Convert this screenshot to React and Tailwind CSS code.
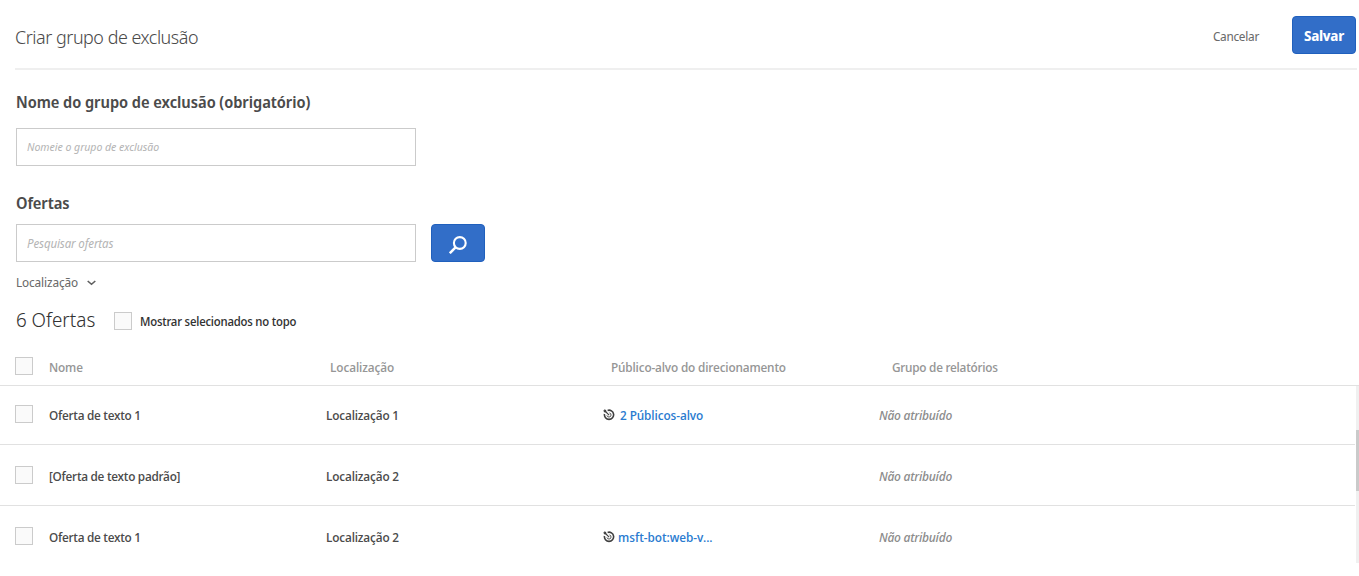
const rows = [
  { name: "Oferta de texto 1", location: "Localização 1", audience: "2 Públicos-alvo", gap: "pl-[5px] tracking-[-0.08px]" },
  { name: "[Oferta de texto padrão]", location: "Localização 2" },
  { name: "Oferta de texto 1", location: "Localização 2", audience: "msft-bot:web-v...", gap: "pl-[3px] tracking-[-0.02px]" },
];

function Checkbox({ className = "" }) {
  return <span role="checkbox" aria-checked="false" className={`block size-[18px] shrink-0 border border-[#cbcbcb] bg-[#fafafa] ${className}`} />;
}

function TargetIcon() {
  return (
    <svg width="12" height="12" viewBox="0 0 12 12" fill="none" stroke="#3f3f3f" className="mt-px shrink-0">
      <path d="M4.6 1.4A4.6 4.6 0 1 1 1.5 5" strokeWidth="1.6" />
      <path d="M6.4 3.9A2.1 2.1 0 1 1 3.9 6.4" strokeWidth="0.9" />
      <path d="M1.5 1.5 6.1 6.1" strokeWidth="1.1" />
      <path d="M0 1.6 1.2 1.6 1.7 0 3.4 1.7 3.2 3.2 1.6 3.4Z" fill="#3f3f3f" stroke="none" />
    </svg>
  );
}

function SearchIcon() {
  return (
    <svg width="18" height="18" viewBox="0 0 18 18" fill="none" stroke="#fff" strokeWidth="2.1" className="mt-[3px]">
      <circle cx="10.8" cy="7" r="5.9" />
      <path d="M6.8 11.2.8 17.2" strokeWidth="2.5" />
    </svg>
  );
}

export default function App() {
  return (
    <div className="h-[576px] w-full overflow-hidden bg-white font-['Noto_Sans_Display','Noto_Sans',sans-serif] text-[12.5px] text-[#4b4b4b]">
      <header className="ml-[15px] mr-[2px] flex h-[70px] items-start justify-between border-b-2 border-[#efefef]">
        <h1 className="mt-[23px] text-[19px] leading-[28px] font-light tracking-[-0.46px]">Criar grupo de exclusão</h1>
        <div className="mr-px flex items-start pt-[16px]">
          <button className="mr-[33px] h-[38px] pt-[5px] tracking-[-0.28px] text-[#6a6a6a]">Cancelar</button>
          <button className="h-[38px] w-[64px] rounded-[4px] border border-[#2060bd] bg-[#326ec8] text-[14px] font-bold tracking-[-0.27px] text-white">
            Salvar
          </button>
        </div>
      </header>

      <section className="pl-[16px]">
        <h2 className="pt-[20px] text-[15.5px] leading-[24px] font-semibold tracking-[-0.03px]">Nome do grupo de exclusão (obrigatório)</h2>
        <input
          className="mt-[14px] block h-[38px] w-[400px] border border-[#cbcbcb] px-[10px] pb-[2px] text-[11px] outline-none placeholder:text-[#b5b5b5] placeholder:italic"
          placeholder="Nomeie o grupo de exclusão"
        />
        <h2 className="pt-[25px] text-[15.5px] leading-[24px] font-semibold tracking-[-0.1px]">Ofertas</h2>
        <div className="mt-[9px] flex gap-[15px]">
          <input
            className="block h-[38px] w-[400px] border border-[#cbcbcb] px-[10px] text-[12px] tracking-[-0.1px] outline-none placeholder:text-[#b5b5b5] placeholder:italic"
            placeholder="Pesquisar ofertas"
          />
          <button aria-label="Pesquisar" className="flex h-[38px] w-[54px] items-center justify-center rounded-[4px] border border-[#2060bd] bg-[#326ec8]">
            <SearchIcon />
          </button>
        </div>
        <button className="mt-[11px] flex h-[20px] items-center gap-[9px] tracking-[-0.13px] text-[#6a6a6a]">
          Localização
          <svg width="9" height="6" viewBox="0 0 9 6" fill="none" stroke="#5f5f5f" strokeWidth="1.6">
            <path d="M.7 1 4.5 4.3 8.3 1" />
          </svg>
        </button>
        <div className="mt-[12px] flex h-[30px] items-center">
          <span className="w-[98px] text-[20px] leading-[30px] font-light text-[#323232]">6 Ofertas</span>
          <Checkbox className="mt-[2px]" />
          <span className="ml-[8px] pt-[3px] text-[12px] font-medium tracking-[-0.2px] text-[#323232]">Mostrar selecionados no topo</span>
        </div>
      </section>

      <div className="mt-[14px] flex h-[37px] items-center border-b border-[#e1e1e1] pl-[15px] font-medium tracking-[-0.15px] text-[#969696]">
        <Checkbox className="-mt-[2px]" />
        <span className="ml-[16px] w-[281px] pt-[2px]">Nome</span>
        <span className="w-[281px] pt-[2px] tracking-[-0.07px]">Localização</span>
        <span className="w-[281px] pt-[2px]">Público-alvo do direcionamento</span>
        <span className="pt-[2px] tracking-[-0.25px]">Grupo de relatórios</span>
      </div>

      <div className="flex h-[177px] overflow-hidden">
        <div className="-mt-[2px] mr-px min-w-0 flex-1 font-medium tracking-[-0.26px]">
          {rows.map((row, i) => (
            <div key={i} className="flex h-[61px] items-center border-b border-[#e1e1e1] pl-[15px]">
              <Checkbox />
              <span className="ml-[16px] w-[277px] pt-[4px]">{row.name}</span>
              <span className="w-[277px] pt-[4px] tracking-[-0.14px]">{row.location}</span>
              <span className="flex w-[276px] items-center text-[#2a7bd0]">
                {row.audience && (
                  <>
                    <TargetIcon />
                    <span className={`pt-[4px] ${row.gap}`}>{row.audience}</span>
                  </>
                )}
              </span>
              <span className="pt-[4px] tracking-[-0.19px] text-[#8c8c8c] italic">Não atribuído</span>
            </div>
          ))}
        </div>
        <div className="w-[3px] bg-[#f0f0f0] pt-[44px]">
          <div className="h-[61px] bg-[#cacaca]" />
        </div>
      </div>
    </div>
  );
}
